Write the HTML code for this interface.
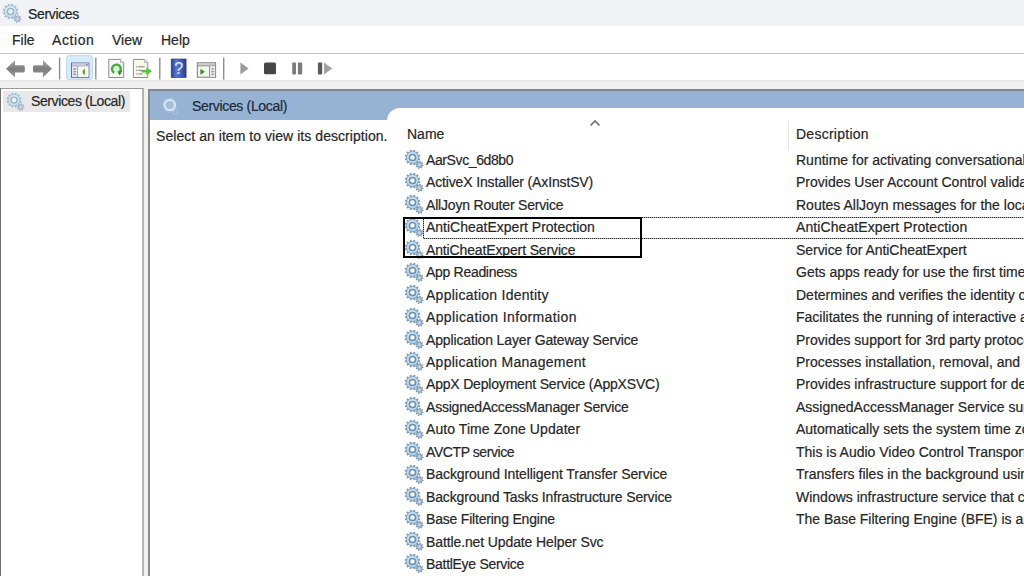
<!DOCTYPE html>
<html><head><meta charset="utf-8">
<style>
*{margin:0;padding:0;box-sizing:border-box}
html,body{width:1024px;height:576px;overflow:hidden;background:#fff}
body{position:relative;font-family:"Liberation Sans",sans-serif;font-size:14px;color:#262626}
.a{position:absolute}
.t{position:absolute;white-space:nowrap;line-height:16px;-webkit-text-stroke:0.2px currentColor}
#title{left:0;top:0;width:1024px;height:26px;background:#f1f2f6}
#menu{left:0;top:26px;width:1024px;height:27px;background:#fff}
#mline{left:0;top:53px;width:1024px;height:1px;background:#c2c2c2}
#tool{left:0;top:54px;width:1024px;height:26px;background:#fff}
#band{left:0;top:80px;width:1024px;height:496px;background:linear-gradient(#e7e7e9 0 2px,#f0f0ef 2px)}
#lpane{left:0;top:88px;width:144px;height:488px;background:#fff;border-left:1px solid #6e6e6e;border-top:1px solid #9a9a9a;border-right:2px solid #b4b4b8}
#rpane{left:148px;top:89px;width:876px;height:487px;background:#fff;border-left:2px solid #8a8a8a;border-top:2px solid #7d8590}
#hdr{left:150px;top:91px;width:874px;height:29px;background:#97b3d3}
#list{left:387px;top:108px;width:637px;height:468px;background:#fff;border-top-left-radius:13px}
.sep{position:absolute;width:1px;background:#8d8d8d}
.row{position:absolute;left:0;height:22.45px;width:1024px}
.ic{position:absolute;width:20px;height:20px}
</style></head><body>
<svg width="0" height="0" style="position:absolute">
<defs>
<radialGradient id="gg" cx="40%" cy="35%" r="70%">
<stop offset="0" stop-color="#e6f1fb"/><stop offset="0.6" stop-color="#a9c8e6"/><stop offset="1" stop-color="#6f9cc6"/>
</radialGradient>
<symbol id="gear" viewBox="0 0 20 20"><radialGradient id="gearg" cx="45%" cy="40%" r="70%"><stop offset="0" stop-color="#dff1fa"/><stop offset="1" stop-color="#a8cbe4"/></radialGradient><rect x="13.68" y="9.20" width="2.4" height="2.0" transform="rotate(14.9 14.88 10.20)" fill="#7d9bb8"/><rect x="11.98" y="12.16" width="2.4" height="2.0" transform="rotate(44.9 13.18 13.16)" fill="#7d9bb8"/><rect x="9.02" y="13.87" width="2.4" height="2.0" transform="rotate(74.9 10.22 14.87)" fill="#7d9bb8"/><rect x="5.60" y="13.88" width="2.4" height="2.0" transform="rotate(104.9 6.80 14.88)" fill="#7d9bb8"/><rect x="2.64" y="12.18" width="2.4" height="2.0" transform="rotate(134.9 3.84 13.18)" fill="#7d9bb8"/><rect x="0.93" y="9.22" width="2.4" height="2.0" transform="rotate(164.9 2.13 10.22)" fill="#7d9bb8"/><rect x="0.92" y="5.80" width="2.4" height="2.0" transform="rotate(194.9 2.12 6.80)" fill="#7d9bb8"/><rect x="2.62" y="2.84" width="2.4" height="2.0" transform="rotate(224.9 3.82 3.84)" fill="#7d9bb8"/><rect x="5.58" y="1.13" width="2.4" height="2.0" transform="rotate(254.9 6.78 2.13)" fill="#7d9bb8"/><rect x="9.00" y="1.12" width="2.4" height="2.0" transform="rotate(284.9 10.20 2.12)" fill="#7d9bb8"/><rect x="11.96" y="2.82" width="2.4" height="2.0" transform="rotate(314.9 13.16 3.82)" fill="#7d9bb8"/><rect x="13.67" y="5.78" width="2.4" height="2.0" transform="rotate(344.9 14.87 6.78)" fill="#7d9bb8"/><circle cx="8.5" cy="8.5" r="6.1" fill="url(#gearg)" stroke="#7d9bb8" stroke-width="0.8"/><circle cx="8.5" cy="8.5" r="3.1" fill="#f2f8fc" stroke="#6c8eb0" stroke-width="1.5"/><rect x="17.83" y="15.81" width="1.6" height="1.3" transform="rotate(11.5 18.63 16.46)" fill="#7893ae"/><rect x="16.42" y="17.90" width="1.6" height="1.3" transform="rotate(56.5 17.22 18.55)" fill="#7893ae"/><rect x="13.94" y="18.38" width="1.6" height="1.3" transform="rotate(101.5 14.74 19.03)" fill="#7893ae"/><rect x="11.85" y="16.97" width="1.6" height="1.3" transform="rotate(146.5 12.65 17.62)" fill="#7893ae"/><rect x="11.37" y="14.49" width="1.6" height="1.3" transform="rotate(191.5 12.17 15.14)" fill="#7893ae"/><rect x="12.78" y="12.40" width="1.6" height="1.3" transform="rotate(236.5 13.58 13.05)" fill="#7893ae"/><rect x="15.26" y="11.92" width="1.6" height="1.3" transform="rotate(281.5 16.06 12.57)" fill="#7893ae"/><rect x="17.35" y="13.33" width="1.6" height="1.3" transform="rotate(326.5 18.15 13.98)" fill="#7893ae"/><circle cx="15.4" cy="15.8" r="2.7" fill="#a6bdd3" stroke="#7893ae" stroke-width="0.7"/><circle cx="15.4" cy="15.8" r="0.9" fill="#dde8f2"/></symbol><symbol id="gearf" viewBox="0 0 20 20"><radialGradient id="gearfg" cx="45%" cy="40%" r="70%"><stop offset="0" stop-color="#e6f5f8"/><stop offset="1" stop-color="#bcdce8"/></radialGradient><rect x="13.68" y="9.20" width="2.4" height="2.0" transform="rotate(14.9 14.88 10.20)" fill="#a3bccd"/><rect x="11.98" y="12.16" width="2.4" height="2.0" transform="rotate(44.9 13.18 13.16)" fill="#a3bccd"/><rect x="9.02" y="13.87" width="2.4" height="2.0" transform="rotate(74.9 10.22 14.87)" fill="#a3bccd"/><rect x="5.60" y="13.88" width="2.4" height="2.0" transform="rotate(104.9 6.80 14.88)" fill="#a3bccd"/><rect x="2.64" y="12.18" width="2.4" height="2.0" transform="rotate(134.9 3.84 13.18)" fill="#a3bccd"/><rect x="0.93" y="9.22" width="2.4" height="2.0" transform="rotate(164.9 2.13 10.22)" fill="#a3bccd"/><rect x="0.92" y="5.80" width="2.4" height="2.0" transform="rotate(194.9 2.12 6.80)" fill="#a3bccd"/><rect x="2.62" y="2.84" width="2.4" height="2.0" transform="rotate(224.9 3.82 3.84)" fill="#a3bccd"/><rect x="5.58" y="1.13" width="2.4" height="2.0" transform="rotate(254.9 6.78 2.13)" fill="#a3bccd"/><rect x="9.00" y="1.12" width="2.4" height="2.0" transform="rotate(284.9 10.20 2.12)" fill="#a3bccd"/><rect x="11.96" y="2.82" width="2.4" height="2.0" transform="rotate(314.9 13.16 3.82)" fill="#a3bccd"/><rect x="13.67" y="5.78" width="2.4" height="2.0" transform="rotate(344.9 14.87 6.78)" fill="#a3bccd"/><circle cx="8.5" cy="8.5" r="6.1" fill="url(#gearfg)" stroke="#a3bccd" stroke-width="0.8"/><circle cx="8.5" cy="8.5" r="3.1" fill="#eef6fa" stroke="#98b4c9" stroke-width="1.5"/><rect x="17.83" y="15.81" width="1.6" height="1.3" transform="rotate(11.5 18.63 16.46)" fill="#9db1c4"/><rect x="16.42" y="17.90" width="1.6" height="1.3" transform="rotate(56.5 17.22 18.55)" fill="#9db1c4"/><rect x="13.94" y="18.38" width="1.6" height="1.3" transform="rotate(101.5 14.74 19.03)" fill="#9db1c4"/><rect x="11.85" y="16.97" width="1.6" height="1.3" transform="rotate(146.5 12.65 17.62)" fill="#9db1c4"/><rect x="11.37" y="14.49" width="1.6" height="1.3" transform="rotate(191.5 12.17 15.14)" fill="#9db1c4"/><rect x="12.78" y="12.40" width="1.6" height="1.3" transform="rotate(236.5 13.58 13.05)" fill="#9db1c4"/><rect x="15.26" y="11.92" width="1.6" height="1.3" transform="rotate(281.5 16.06 12.57)" fill="#9db1c4"/><rect x="17.35" y="13.33" width="1.6" height="1.3" transform="rotate(326.5 18.15 13.98)" fill="#9db1c4"/><circle cx="15.4" cy="15.8" r="2.7" fill="#b4c4d3" stroke="#9db1c4" stroke-width="0.7"/><circle cx="15.4" cy="15.8" r="0.9" fill="#dde8f2"/></symbol>
</defs>
</svg>

<div id="title" class="a"></div>
<svg class="ic" style="left:2px;top:3px;width:20px;height:20px"><use href="#gearf"/></svg>
<div class="t" style="left:28px;top:5.9px;font-size:14px;letter-spacing:-0.35px;color:#1b1b1b">Services</div>

<div id="menu" class="a"></div>
<div class="t" style="left:12px;top:31.7px">File</div>
<div class="t" style="left:52px;top:31.7px;letter-spacing:0.6px">Action</div>
<div class="t" style="left:112px;top:31.7px">View</div>
<div class="t" style="left:161px;top:31.7px">Help</div>
<div id="mline" class="a"></div>
<div id="tool" class="a"></div>
<div id="band" class="a"></div>

<!-- toolbar -->
<svg class="a" style="left:0;top:54px" width="340" height="26" viewBox="0 54 340 26">
<defs>
<linearGradient id="arr" x1="0" y1="0" x2="0" y2="1"><stop offset="0" stop-color="#a8a8a8"/><stop offset="0.5" stop-color="#7e7e7e"/><stop offset="1" stop-color="#9a9a9a"/></linearGradient>
<linearGradient id="help" x1="0" y1="0" x2="1" y2="0"><stop offset="0" stop-color="#2a3f9a"/><stop offset="0.35" stop-color="#5a78d8"/><stop offset="1" stop-color="#2b3f8e"/></linearGradient>
</defs>
<path d="M6,68.8 L15,60.2 L15,65.2 L23.2,65.2 Q24.8,65.2 24.8,66.8 L24.8,70.9 Q24.8,72.6 23.2,72.6 L15,72.6 L15,77.6 Z" fill="url(#arr)"/>
<path d="M51.9,68.8 L43,60.2 L43,65.2 L34.6,65.2 Q33,65.2 33,66.8 L33,70.9 Q33,72.6 34.6,72.6 L43,72.6 L43,77.6 Z" fill="url(#arr)"/>
<rect x="58.9" y="57.6" width="1.4" height="21.9" fill="#8e8e8e"/>
<rect x="95.1" y="57.6" width="1.4" height="21.9" fill="#8e8e8e"/>
<rect x="159.1" y="57.6" width="1.4" height="21.9" fill="#8e8e8e"/>
<rect x="223" y="57.6" width="1.4" height="21.9" fill="#8e8e8e"/>
<rect x="66.6" y="55.6" width="26" height="24" rx="2.5" fill="#d6ebfd" stroke="#b9daf8" stroke-width="1"/>
<!-- console tree icon -->
<rect x="71.5" y="63" width="17.4" height="14.4" fill="#f6f7fa" stroke="#6a7089" stroke-width="1"/>
<rect x="72" y="63.5" width="16.4" height="2.2" fill="#c9ced9"/>
<rect x="72" y="65.7" width="16.4" height="0.8" fill="#7c8296"/>
<rect x="86" y="64" width="1.6" height="1.2" fill="#8a6fb0"/>
<rect x="72" y="66.5" width="5.3" height="10.4" fill="#e6e8ee"/>
<rect x="77.3" y="66.5" width="0.9" height="10.4" fill="#7c8296"/>
<rect x="73.3" y="68.3" width="2.6" height="1.4" fill="#8e93a4"/><rect x="73.3" y="71" width="2.6" height="1.4" fill="#8e93a4"/><rect x="73.3" y="73.7" width="2.6" height="1.4" fill="#8e93a4"/>
<rect x="78.2" y="66.5" width="10.2" height="10.4" fill="#f7fbf2"/>
<path d="M84.8,68.6 Q80,72 84.8,75.3 Z" fill="#4aa02c"/>
<!-- refresh -->
<path d="M108.8,59.4 L120.5,59.4 L123.7,62.6 L123.7,77.5 L108.8,77.5 Z" fill="#f8f8f6" stroke="#8c8c8c" stroke-width="1"/>
<path d="M120.5,59.4 L120.5,62.6 L123.7,62.6" fill="#e2e2e2" stroke="#a0a0a0" stroke-width="0.7"/>
<circle cx="116.4" cy="69" r="3.3" fill="#dcf5d4"/><path d="M114.2,72.8 A4.4,4.4 0 1 1 119.4,72.2" fill="none" stroke="#3bae3e" stroke-width="2.4"/>
<path d="M117.2,71.4 L122.2,70.8 L119.8,75.6 Z" fill="#2b8a2b"/>
<!-- export -->
<path d="M133.4,59.4 L144.6,59.4 L147.8,62.6 L147.8,77.5 L133.4,77.5 Z" fill="#f9f8ee" stroke="#8c8c8c" stroke-width="1"/>
<path d="M144.6,59.4 L144.6,62.6 L147.8,62.6" fill="#e2e2e2" stroke="#a0a0a0" stroke-width="0.7"/>
<rect x="136.2" y="66.2" width="1.1" height="1.1" fill="#6f6f6f"/><rect x="138.3" y="66.2" width="6.5" height="1.1" fill="#8a8a8a"/>
<rect x="136.2" y="69.8" width="1.1" height="1.1" fill="#6f6f6f"/><rect x="138.3" y="69.8" width="4" height="1.1" fill="#8a8a8a"/>
<rect x="136.2" y="73.4" width="1.1" height="1.1" fill="#6f6f6f"/><rect x="138.3" y="73.4" width="4" height="1.1" fill="#8a8a8a"/>
<path d="M141.5,70 L146.3,70 L146.3,67.6 L152,71.3 L146.3,75 L146.3,72.6 L141.5,72.6 Z" fill="#55c23a"/>
<!-- help -->
<rect x="171.2" y="59" width="14.9" height="18.6" fill="url(#help)" stroke="#24337a" stroke-width="0.6"/>
<text x="178.7" y="74.3" font-family="Liberation Sans" font-size="16" fill="#e4e8ff" stroke="#e4e8ff" stroke-width="0.2" text-anchor="middle">?</text>
<!-- action pane icon -->
<rect x="197.3" y="62.8" width="18.3" height="14.4" fill="#f2f7ec" stroke="#7b7b7b" stroke-width="1"/>
<rect x="197.8" y="63.3" width="17.3" height="2.2" fill="#c8c8c8"/>
<rect x="197.8" y="65.5" width="17.3" height="0.8" fill="#7d7d7d"/>
<rect x="209.2" y="66.3" width="0.9" height="10.4" fill="#7d7d7d"/>
<rect x="210.1" y="66.3" width="5" height="10.4" fill="#e8eaed"/>
<rect x="211.4" y="68.3" width="2.5" height="1.3" fill="#8d929a"/><rect x="211.4" y="71" width="2.5" height="1.3" fill="#8d929a"/><rect x="211.4" y="73.7" width="2.5" height="1.3" fill="#8d929a"/>
<path d="M200.4,68.8 L205,71.8 L200.4,74.8 Z" fill="#3f8f26"/>
<!-- play/stop/pause/resume -->
<path d="M240.4,62.6 L248.6,68.6 L240.4,74.6 Z" fill="#9c9c9c"/>
<rect x="264" y="62.6" width="12" height="11.7" rx="1.6" fill="#474747"/>
<rect x="292.2" y="62.6" width="3.8" height="11.8" rx="0.8" fill="#7c7c7c"/>
<rect x="297.9" y="62.6" width="4.3" height="11.8" rx="0.8" fill="#7c7c7c"/>
<rect x="317.9" y="62.6" width="4.3" height="11.8" rx="0.8" fill="#5a5a5a"/>
<path d="M324,62.6 L332.3,68.6 L324,74.6 Z" fill="#a2a2a2"/>
</svg>


<div id="lpane" class="a"></div>
<div class="a" style="left:3px;top:91px;width:127px;height:20.5px;background:#e8e8e8"></div>
<svg class="ic" style="left:6px;top:92px;width:19px;height:19px"><use href="#gearf"/></svg>
<div class="t" style="left:31px;top:93px;letter-spacing:-0.4px">Services (Local)</div>

<div id="rpane" class="a"></div>
<div id="hdr" class="a"></div>
<svg class="a" style="left:160px;top:96px" width="22" height="22" viewBox="0 0 22 22">
<circle cx="9.7" cy="9" r="5.2" fill="#a6bdd6" stroke="#d6e6f6" stroke-width="2.2"/>
<circle cx="9.7" cy="9" r="7.2" fill="none" stroke="#b3c9e0" stroke-width="1" stroke-dasharray="1.5 1.3" opacity="0.7"/>
<circle cx="15.5" cy="16" r="2.5" fill="none" stroke="#b8cde3" stroke-width="1" opacity="0.8"/>
</svg>
<div class="t" style="left:192px;top:97.7px;color:#1c2838;letter-spacing:-0.333px">Services (Local)</div>
<div id="list" class="a"></div>
<div class="t" style="left:156px;top:127.5px;letter-spacing:0.05px">Select an item to view its description.</div>

<!-- column headers -->
<div class="t" style="left:407px;top:126.4px;color:#262626">Name</div>
<div class="t" style="left:796px;top:126.4px;color:#262626;letter-spacing:0.26px">Description</div>
<div class="a" style="left:788px;top:120px;width:1px;height:30px;background:#e5e5e5"></div>
<svg class="a" style="left:589px;top:119px" width="12" height="8"><path d="M1.5,6.5 L6,2 L10.5,6.5" fill="none" stroke="#6f6f6f" stroke-width="1.6"/></svg>

<svg class="ic" style="left:404px;top:149.35px;width:20px;height:20px"><use href="#gear"/></svg>
<div class="t" style="left:426px;top:151.95px;letter-spacing:-0.391px">AarSvc_6d8b0</div>
<div class="t" style="left:796px;top:151.95px;letter-spacing:0.000px">Runtime for activating conversational agent applications</div>
<svg class="ic" style="left:404px;top:171.80px;width:20px;height:20px"><use href="#gear"/></svg>
<div class="t" style="left:426px;top:174.40px;letter-spacing:-0.148px">ActiveX Installer (AxInstSV)</div>
<div class="t" style="left:796px;top:174.40px;letter-spacing:0.000px">Provides User Account Control validation for the installation of ActiveX controls</div>
<svg class="ic" style="left:404px;top:194.25px;width:20px;height:20px"><use href="#gear"/></svg>
<div class="t" style="left:426px;top:196.85px;letter-spacing:-0.190px">AllJoyn Router Service</div>
<div class="t" style="left:796px;top:196.85px;letter-spacing:0.000px">Routes AllJoyn messages for the local AllJoyn clients</div>
<svg class="ic" style="left:404px;top:216.70px;width:20px;height:20px"><use href="#gear"/></svg>
<div class="t" style="left:426px;top:219.30px;letter-spacing:0.000px">AntiCheatExpert Protection</div>
<div class="t" style="left:796px;top:219.30px;letter-spacing:0.092px">AntiCheatExpert Protection</div>
<svg class="ic" style="left:404px;top:239.15px;width:20px;height:20px"><use href="#gear"/></svg>
<div class="t" style="left:426px;top:241.75px;letter-spacing:-0.136px">AntiCheatExpert Service</div>
<div class="t" style="left:796px;top:241.75px;letter-spacing:-0.050px">Service for AntiCheatExpert</div>
<svg class="ic" style="left:404px;top:261.60px;width:20px;height:20px"><use href="#gear"/></svg>
<div class="t" style="left:426px;top:264.20px;letter-spacing:-0.300px">App Readiness</div>
<div class="t" style="left:796px;top:264.20px;letter-spacing:0.000px">Gets apps ready for use the first time a user signs in</div>
<svg class="ic" style="left:404px;top:284.05px;width:20px;height:20px"><use href="#gear"/></svg>
<div class="t" style="left:426px;top:286.65px;letter-spacing:0.263px">Application Identity</div>
<div class="t" style="left:796px;top:286.65px;letter-spacing:0.000px">Determines and verifies the identity of an application</div>
<svg class="ic" style="left:404px;top:306.50px;width:20px;height:20px"><use href="#gear"/></svg>
<div class="t" style="left:426px;top:309.10px;letter-spacing:0.364px">Application Information</div>
<div class="t" style="left:796px;top:309.10px;letter-spacing:0.000px">Facilitates the running of interactive applications</div>
<svg class="ic" style="left:404px;top:328.95px;width:20px;height:20px"><use href="#gear"/></svg>
<div class="t" style="left:426px;top:331.55px;letter-spacing:-0.147px">Application Layer Gateway Service</div>
<div class="t" style="left:796px;top:331.55px;letter-spacing:0.000px">Provides support for 3rd party protocol plug-ins</div>
<svg class="ic" style="left:404px;top:351.40px;width:20px;height:20px"><use href="#gear"/></svg>
<div class="t" style="left:426px;top:354.00px;letter-spacing:0.267px">Application Management</div>
<div class="t" style="left:796px;top:354.00px;letter-spacing:0.000px">Processes installation, removal, and enumeration requests</div>
<svg class="ic" style="left:404px;top:373.85px;width:20px;height:20px"><use href="#gear"/></svg>
<div class="t" style="left:426px;top:376.45px;letter-spacing:-0.188px">AppX Deployment Service (AppXSVC)</div>
<div class="t" style="left:796px;top:376.45px;letter-spacing:0.000px">Provides infrastructure support for deploying Store applications</div>
<svg class="ic" style="left:404px;top:396.30px;width:20px;height:20px"><use href="#gear"/></svg>
<div class="t" style="left:426px;top:398.90px;letter-spacing:-0.207px">AssignedAccessManager Service</div>
<div class="t" style="left:796px;top:398.90px;letter-spacing:0.000px">AssignedAccessManager Service supports kiosk experience</div>
<svg class="ic" style="left:404px;top:418.75px;width:20px;height:20px"><use href="#gear"/></svg>
<div class="t" style="left:426px;top:421.35px;letter-spacing:0.076px">Auto Time Zone Updater</div>
<div class="t" style="left:796px;top:421.35px;letter-spacing:0.000px">Automatically sets the system time zone.</div>
<svg class="ic" style="left:404px;top:441.20px;width:20px;height:20px"><use href="#gear"/></svg>
<div class="t" style="left:426px;top:443.80px;letter-spacing:-0.417px">AVCTP service</div>
<div class="t" style="left:796px;top:443.80px;letter-spacing:0.000px">This is Audio Video Control Transport Protocol service</div>
<svg class="ic" style="left:404px;top:463.65px;width:20px;height:20px"><use href="#gear"/></svg>
<div class="t" style="left:426px;top:466.25px;letter-spacing:-0.079px">Background Intelligent Transfer Service</div>
<div class="t" style="left:796px;top:466.25px;letter-spacing:0.000px">Transfers files in the background using idle network bandwidth</div>
<svg class="ic" style="left:404px;top:486.10px;width:20px;height:20px"><use href="#gear"/></svg>
<div class="t" style="left:426px;top:488.70px;letter-spacing:-0.132px">Background Tasks Infrastructure Service</div>
<div class="t" style="left:796px;top:488.70px;letter-spacing:0.000px">Windows infrastructure service that controls which background tasks can run</div>
<svg class="ic" style="left:404px;top:508.55px;width:20px;height:20px"><use href="#gear"/></svg>
<div class="t" style="left:426px;top:511.15px;letter-spacing:-0.200px">Base Filtering Engine</div>
<div class="t" style="left:796px;top:511.15px;letter-spacing:0.000px">The Base Filtering Engine (BFE) is a service that manages firewall</div>
<svg class="ic" style="left:404px;top:531.00px;width:20px;height:20px"><use href="#gear"/></svg>
<div class="t" style="left:426px;top:533.60px;letter-spacing:-0.111px">Battle.net Update Helper Svc</div>
<svg class="ic" style="left:404px;top:553.45px;width:20px;height:20px"><use href="#gear"/></svg>
<div class="t" style="left:426px;top:556.05px;letter-spacing:-0.293px">BattlEye Service</div>
<div class="a" style="left:424px;top:217px;width:600px;height:1px;background:repeating-linear-gradient(90deg,#2a2a2a 0 1px,#aaa 1px 2px)"></div>
<div class="a" style="left:424px;top:238px;width:600px;height:1px;background:repeating-linear-gradient(90deg,#2a2a2a 0 1px,#aaa 1px 2px)"></div>
<div class="a" style="left:423px;top:217px;width:1px;height:22px;background:repeating-linear-gradient(180deg,#2a2a2a 0 1px,#aaa 1px 2px)"></div>
<div class="a" style="left:403px;top:217px;width:239px;height:41px;border:2.2px solid #000"></div>
</body></html>
